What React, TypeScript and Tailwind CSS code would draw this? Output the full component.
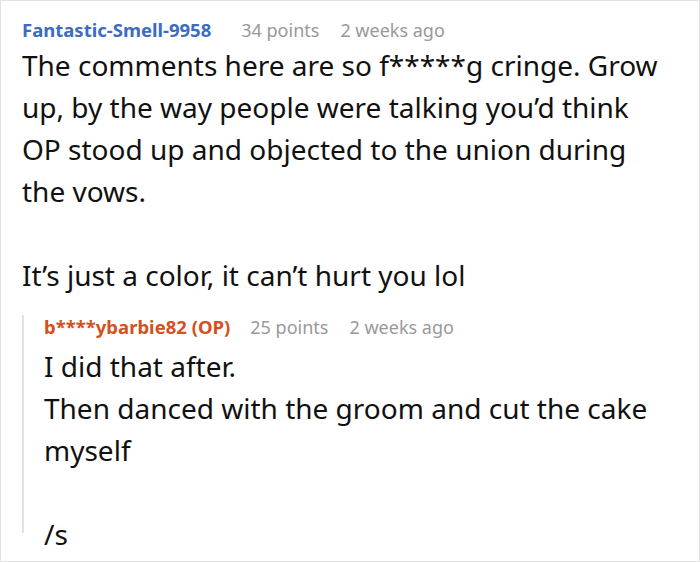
import React from 'react'

const font = { fontFamily: '"Noto Sans", "Open Sans", sans-serif' }

const Meta = ({
  name,
  color,
  points,
  when,
  gap,
}: {
  name: string
  color: string
  points: string
  when: string
  gap: string
}) => (
  <div className={`flex items-baseline ${gap} text-[18px] leading-[24px]`}>
    <span className={`font-bold text-[18.5px] ${color}`}>{name}</span>
    <span className="flex gap-[21px] text-[#999999]">
      <span>{points}</span>
      <span>{when}</span>
    </span>
  </div>
)

export default function App() {
  return (
    <div className="w-[700px] h-[562px] bg-white border border-[#e3e3e3] overflow-hidden text-[#111111]" style={font}>
      <div className="pl-[21px] pr-[39px] pt-[17px]">
        <Meta name="Fantastic-Smell-9958" color="text-[#3b6cc0]" points="34 points" when="2 weeks ago" gap="gap-[30px]" />
        <div className="text-[28px] leading-[42px] mt-[2px]">
          <p>
            The comments here are so f*****g cringe. Grow up, by the way people were talking you’d think OP stood up
            and objected to the union during the vows.
          </p>
          <p className="mt-[42px]">It’s just a color, it can’t hurt you lol</p>
        </div>

        {/* reply */}
        <div className="mt-[26px] border-l-2 border-[#e3e3e3] pl-[20px] h-[218px]">
          <div className="-mt-[7px]">
            <Meta name="b****ybarbie82 (OP)" color="text-[#d4501c]" points="25 points" when="2 weeks ago" gap="gap-[20px]" />
          </div>
          <div className="text-[28px] leading-[42px] mt-[6px]">
            <p>I did that after.</p>
            <p>Then danced with the groom and cut the cake myself</p>
            <p className="mt-[42px]">/s</p>
          </div>
        </div>
      </div>
    </div>
  )
}
